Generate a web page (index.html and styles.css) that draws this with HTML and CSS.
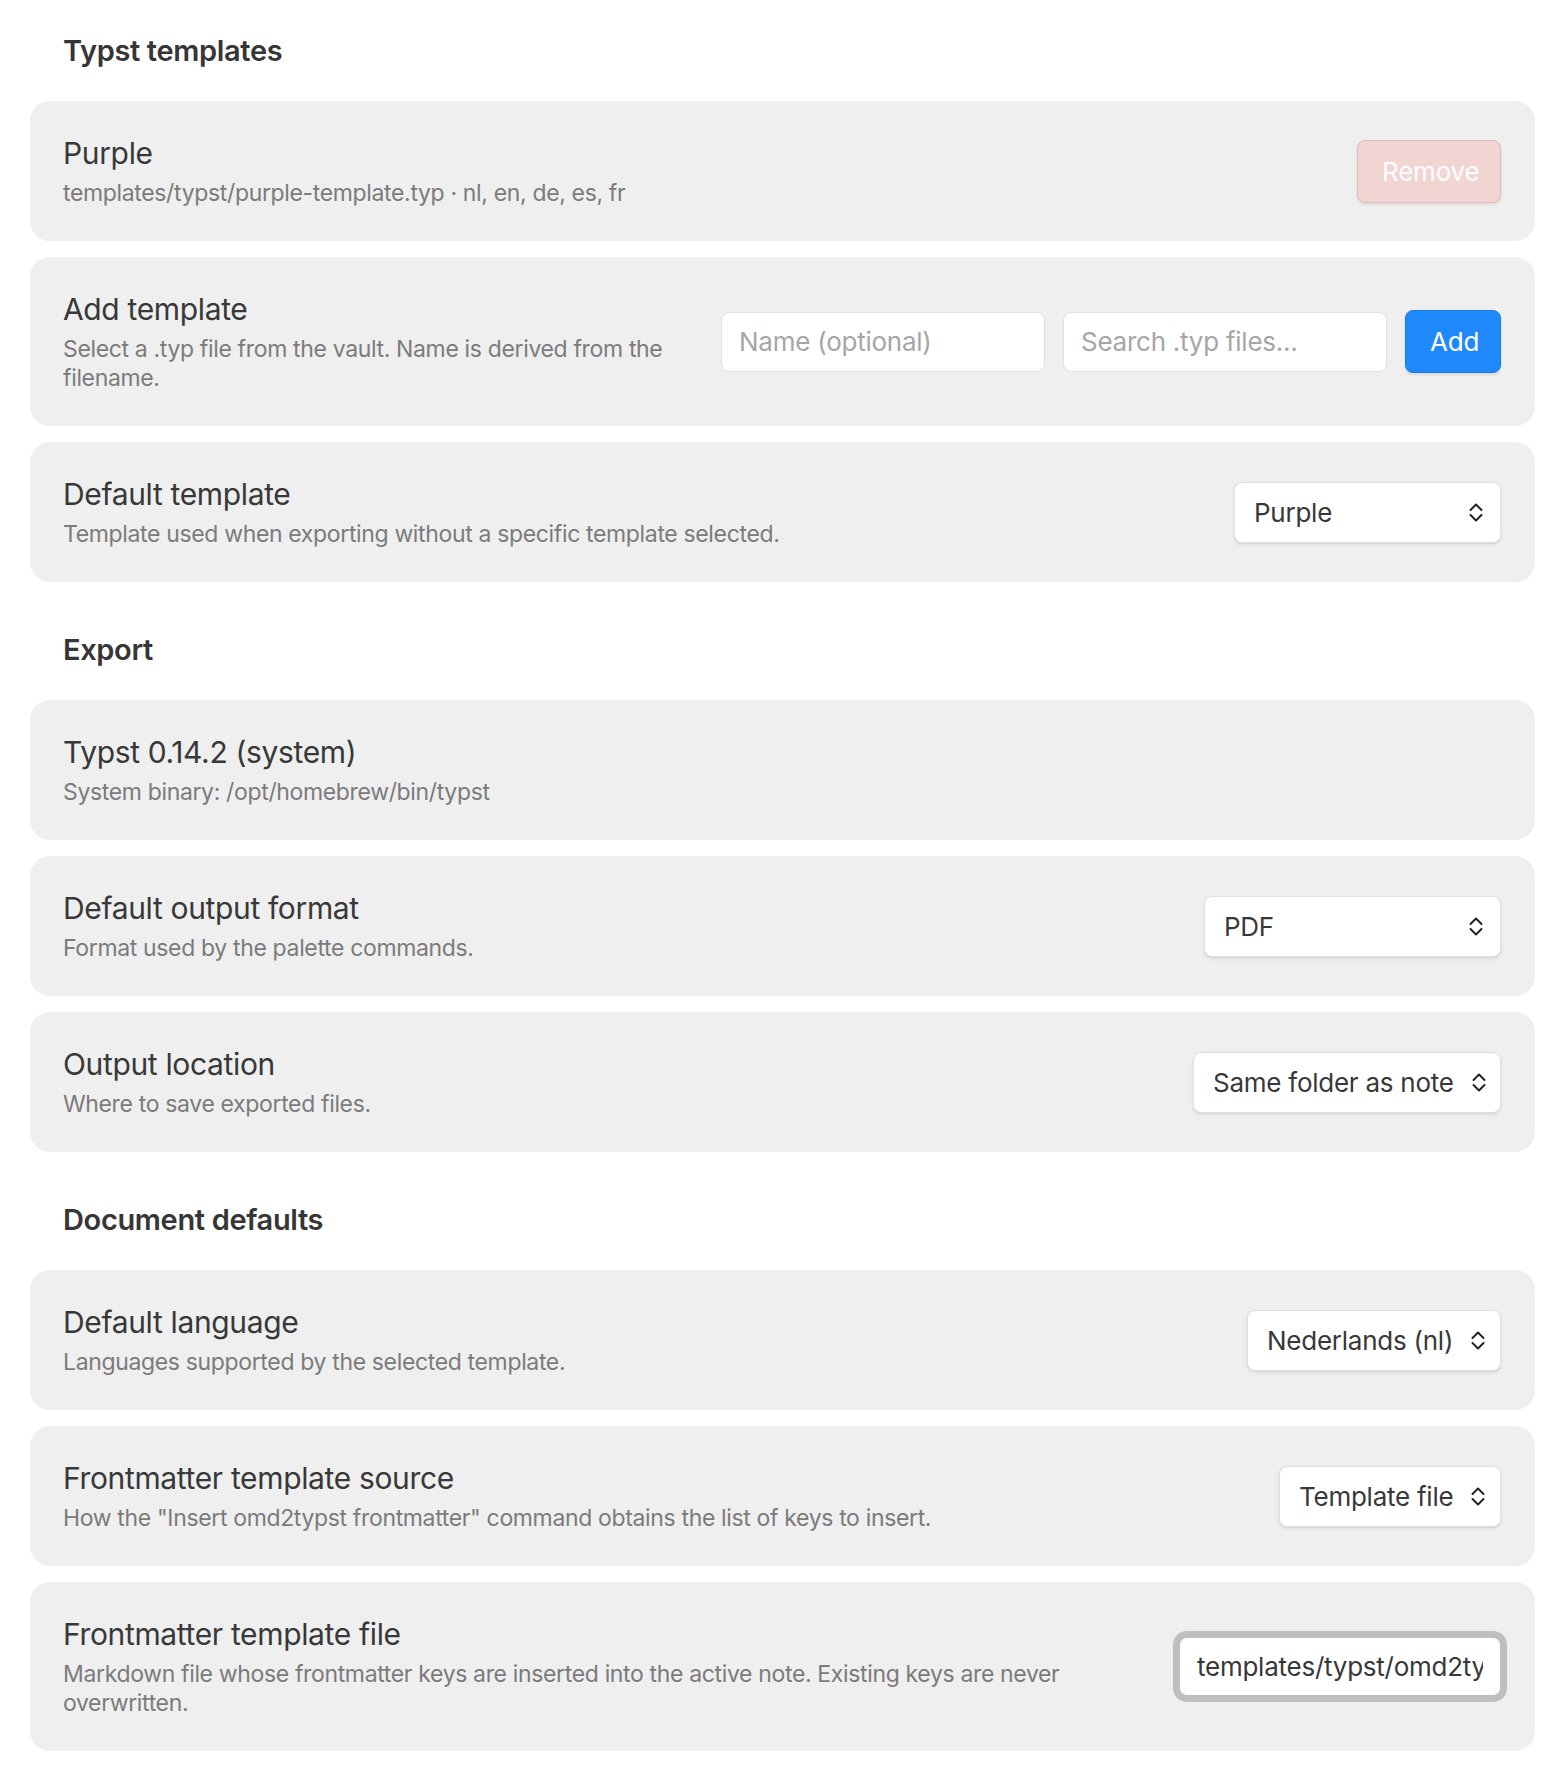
FILE: index.html
```html
<!DOCTYPE html>
<html lang="en">
<head>
<meta charset="utf-8">
<title>Typst settings</title>
<link rel="stylesheet" href="styles.css">
</head>
<body>
<div class="settings">

  <section class="section">
    <h2 class="section-heading">Typst templates</h2>
    <div class="setting-list">
      <div class="setting">
        <div class="info">
          <div class="name">Purple</div>
          <div class="desc">templates/typst/purple-template.typ · nl, en, de, es, fr</div>
        </div>
        <div class="control">
          <button class="btn btn-warning" type="button">Remove</button>
        </div>
      </div>

      <div class="setting">
        <div class="info">
          <div class="name">Add template</div>
          <div class="desc">Select a .typ file from the vault. Name is derived from the filename.</div>
        </div>
        <div class="control">
          <input class="text-input" type="text" placeholder="Name (optional)">
          <input class="text-input" type="text" placeholder="Search .typ files...">
          <button class="btn btn-cta" type="button">Add</button>
        </div>
      </div>

      <div class="setting">
        <div class="info">
          <div class="name">Default template</div>
          <div class="desc">Template used when exporting without a specific template selected.</div>
        </div>
        <div class="control">
          <div class="dropdown dd-template">
            <span>Purple</span>
            <svg class="chev" viewBox="0 0 14 19" width="14" height="19"><path d="M1.5 7 L7 1.5 L12.5 7 M1.5 12 L7 17.5 L12.5 12"/></svg>
          </div>
        </div>
      </div>
    </div>
  </section>

  <section class="section">
    <h2 class="section-heading">Export</h2>
    <div class="setting-list">
      <div class="setting">
        <div class="info">
          <div class="name">Typst 0.14.2 (system)</div>
          <div class="desc">System binary: /opt/homebrew/bin/typst</div>
        </div>
      </div>

      <div class="setting">
        <div class="info">
          <div class="name">Default output format</div>
          <div class="desc">Format used by the palette commands.</div>
        </div>
        <div class="control">
          <div class="dropdown dd-format">
            <span>PDF</span>
            <svg class="chev" viewBox="0 0 14 19" width="14" height="19"><path d="M1.5 7 L7 1.5 L12.5 7 M1.5 12 L7 17.5 L12.5 12"/></svg>
          </div>
        </div>
      </div>

      <div class="setting">
        <div class="info">
          <div class="name">Output location</div>
          <div class="desc">Where to save exported files.</div>
        </div>
        <div class="control">
          <div class="dropdown dd-location">
            <span>Same folder as note</span>
            <svg class="chev" viewBox="0 0 14 19" width="14" height="19"><path d="M1.5 7 L7 1.5 L12.5 7 M1.5 12 L7 17.5 L12.5 12"/></svg>
          </div>
        </div>
      </div>
    </div>
  </section>

  <section class="section">
    <h2 class="section-heading">Document defaults</h2>
    <div class="setting-list">
      <div class="setting">
        <div class="info">
          <div class="name">Default language</div>
          <div class="desc">Languages supported by the selected template.</div>
        </div>
        <div class="control">
          <div class="dropdown dd-language">
            <span>Nederlands (nl)</span>
            <svg class="chev" viewBox="0 0 14 19" width="14" height="19"><path d="M1.5 7 L7 1.5 L12.5 7 M1.5 12 L7 17.5 L12.5 12"/></svg>
          </div>
        </div>
      </div>

      <div class="setting">
        <div class="info">
          <div class="name">Frontmatter template source</div>
          <div class="desc">How the "Insert omd2typst frontmatter" command obtains the list of keys to insert.</div>
        </div>
        <div class="control">
          <div class="dropdown dd-source">
            <span>Template file</span>
            <svg class="chev" viewBox="0 0 14 19" width="14" height="19"><path d="M1.5 7 L7 1.5 L12.5 7 M1.5 12 L7 17.5 L12.5 12"/></svg>
          </div>
        </div>
      </div>

      <div class="setting">
        <div class="info">
          <div class="name">Frontmatter template file</div>
          <div class="desc">Markdown file whose frontmatter keys are inserted into the active note. Existing keys are never overwritten.</div>
        </div>
        <div class="control">
          <input class="text-input focused" type="text" value="templates/typst/omd2typst-frontmatter.md">
        </div>
      </div>
    </div>
  </section>

</div>
</body>
</html>
```

FILE: styles.css
```css
html, body {
  margin: 0;
  background: #ffffff;
}

body {
  font-family: Inter, "Noto Sans", "Liberation Sans", sans-serif;
  color: #383838;
}

.settings {
  padding: 31px 31px 31px 30px;
}

.section + .section {
  margin-top: 48px;
}

.section-heading {
  margin: 0 0 31px;
  padding-left: 33px;
  font-size: 29px;
  line-height: 39px;
  font-weight: 600;
  letter-spacing: -0.35px;
  color: #363636;
}

.setting-list {
  display: flex;
  flex-direction: column;
  gap: 16px;
}

.setting {
  display: flex;
  align-items: center;
  gap: 40px;
  background: #efefef;
  border-radius: 20px;
  padding: 33px 34px 33px 33px;
}

.info {
  flex: 1 1 auto;
  min-width: 0;
}

.name {
  font-size: 30px;
  line-height: 39px;
  letter-spacing: -0.35px;
  color: #383838;
}

.desc {
  margin-top: 6px;
  font-size: 23px;
  line-height: 29px;
  letter-spacing: -0.35px;
  color: #7b7b7b;
}

.control {
  flex: 0 0 auto;
  display: flex;
  align-items: center;
  gap: 18px;
}

.btn {
  box-sizing: border-box;
  height: 63px;
  padding: 0 24px;
  border-radius: 8px;
  font-family: inherit;
  font-size: 26px;
  letter-spacing: -0.2px;
  color: #ffffff;
  cursor: pointer;
}

.btn-warning {
  width: 144px;
  background: #f2d4d3;
  border: 1px solid #e0b8b6;
  box-shadow: 0 2px 3px rgba(0, 0, 0, 0.08);
}

.btn-cta {
  width: 96px;
  background: #1f88fb;
  border: 1px solid #1b7be6;
  box-shadow: 0 2px 3px rgba(0, 0, 0, 0.1);
}

.text-input {
  box-sizing: border-box;
  width: 324px;
  height: 60px;
  padding: 0 17px;
  border: 1px solid #e1e1e1;
  border-radius: 8px;
  background: #ffffff;
  font-family: inherit;
  font-size: 26px;
  letter-spacing: -0.25px;
  color: #383838;
  outline: none;
}

.text-input::placeholder {
  color: #a6a6a6;
}

.text-input.focused {
  width: 322px;
  height: 59px;
  border-color: #bfbfbf;
  box-shadow: 0 0 0 6px #bfbfbf;
}

.dropdown {
  box-sizing: border-box;
  display: flex;
  align-items: center;
  justify-content: space-between;
  height: 61px;
  padding: 0 17px 0 19px;
  background: #ffffff;
  border: 1px solid #e0e0e0;
  border-radius: 8px;
  box-shadow: 0 1px 1px rgba(0, 0, 0, 0.06), 0 2px 4px rgba(0, 0, 0, 0.07);
  font-size: 26px;
  letter-spacing: -0.25px;
  color: #383838;
  white-space: nowrap;
}

.chev {
  flex: 0 0 auto;
  margin-left: 18px;
  fill: none;
  stroke: #222222;
  stroke-width: 2;
  stroke-linecap: round;
  stroke-linejoin: round;
}

.dd-template { width: 267px; }
.dd-format { width: 297px; }
.dd-location { width: 308px; }
.dd-language { width: 254px; }
.dd-source { width: 222px; }
```
